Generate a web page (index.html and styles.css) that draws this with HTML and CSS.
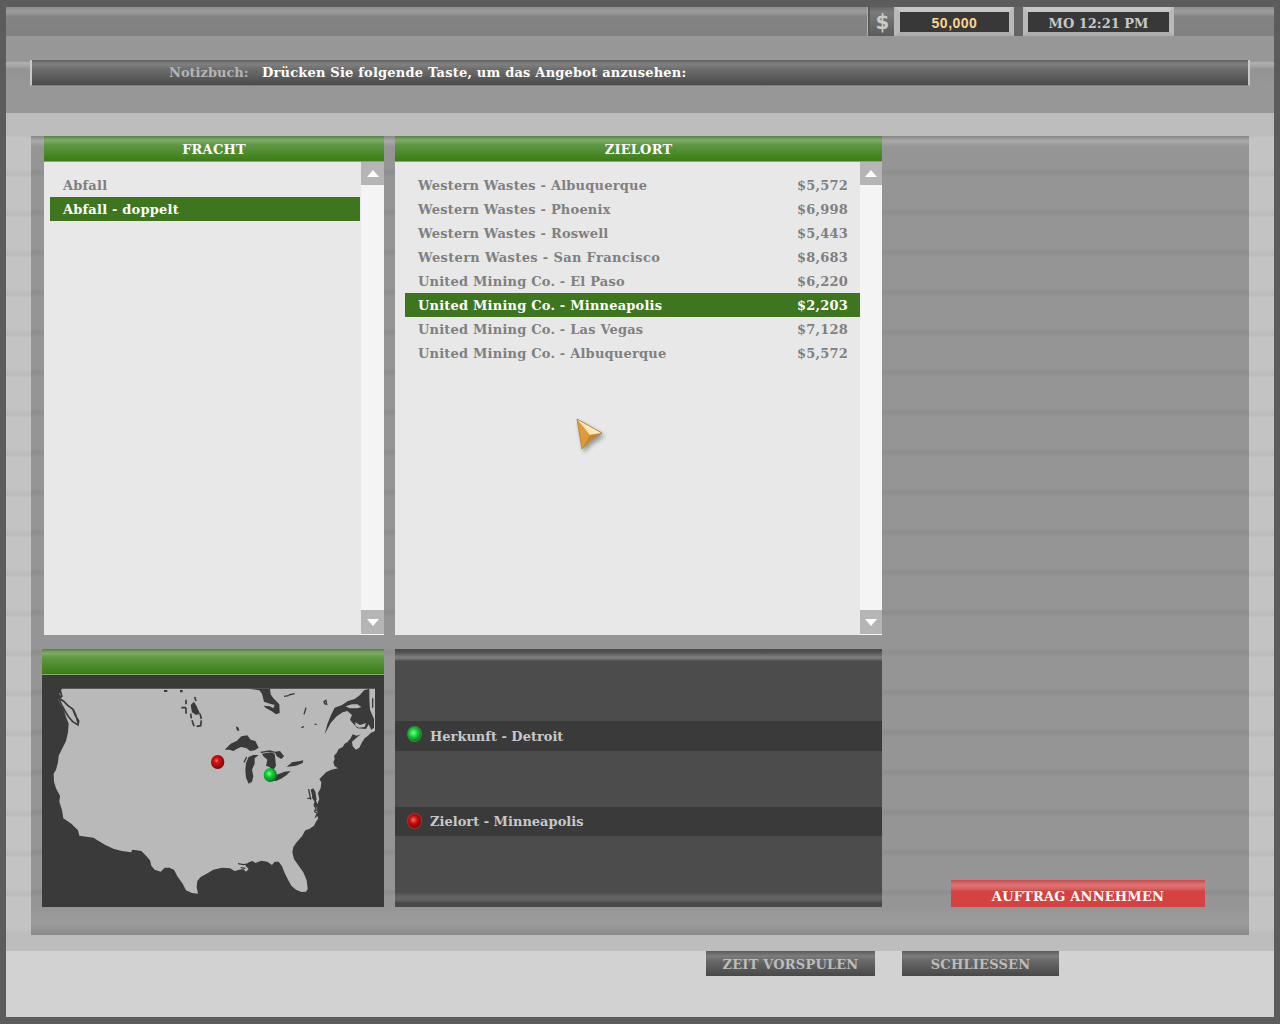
FILE: index.html
```
<!DOCTYPE html>
<html lang="de">

<head>
    <meta charset="UTF-8">
    <meta name="viewport" content="width=device-width, initial-scale=1.0">
    <title>Auftrag</title>
    <link rel="stylesheet" href="styles.css">
</head>

<body>
    <div class="window">
        <div class="topbar">
            <div class="dollar">$</div>
            <div class="display money">50,000</div>
            <div class="split"></div>
            <div class="display clock">MO 12:21 PM</div>
        </div>

        <div class="note-row">
            <div class="note">
                <span class="note-label">Notizbuch:</span>
                <span class="note-text">Drücken Sie folgende Taste, um das Angebot anzusehen:</span>
            </div>
        </div>

        <div class="main">
            <div class="panel">
                <div class="col cargo">
                    <div class="head">FRACHT</div>
                    <div class="list">
                        <ul class="items">
                            <li><span>Abfall</span></li>
                            <li class="active"><span>Abfall - doppelt</span></li>
                        </ul>
                        <div class="scroll">
                            <div class="btn-scroll"><i class="up"></i></div>
                            <div class="btn-scroll"><i class="down"></i></div>
                        </div>
                    </div>
                </div>

                <div class="col target">
                    <div class="head">ZIELORT</div>
                    <div class="list">
                        <ul class="items">
                            <li><span>Western Wastes - Albuquerque</span><b>$5,572</b></li>
                            <li><span>Western Wastes - Phoenix</span><b>$6,998</b></li>
                            <li><span>Western Wastes - Roswell</span><b>$5,443</b></li>
                            <li><span class="wide">Western Wastes - San Francisco</span><b>$8,683</b></li>
                            <li><span>United Mining Co. - El Paso</span><b>$6,220</b></li>
                            <li class="active"><span>United Mining Co. - Minneapolis</span><b>$2,203</b></li>
                            <li><span>United Mining Co. - Las Vegas</span><b>$7,128</b></li>
                            <li><span>United Mining Co. - Albuquerque</span><b>$5,572</b></li>
                        </ul>
                        <div class="scroll">
                            <div class="btn-scroll"><i class="up"></i></div>
                            <div class="btn-scroll"><i class="down"></i></div>
                        </div>
                    </div>
                </div>

                <div class="map">
                    <div class="head"></div>
                    <svg width="342" height="232" viewBox="6 90 1026 696">
                        <defs>
                            <radialGradient id="red" cx="42%" cy="40%" r="60%">
                                <stop offset="0" stop-color="#ff6a5a" />
                                <stop offset=".3" stop-color="#d41414" />
                                <stop offset="1" stop-color="#7a0505" />
                            </radialGradient>
                            <radialGradient id="green" cx="42%" cy="40%" r="60%">
                                <stop offset="0" stop-color="#7dff8c" />
                                <stop offset=".35" stop-color="#16d43c" />
                                <stop offset="1" stop-color="#067a1c" />
                            </radialGradient>
                        </defs>
                        <!-- land -->
                        <path class="land" d="M66 131H1005V258L992 264 984 272 974 280 966 292 958 308 948 314 938 304 936 290 948 280 962 268 950 272 938 268 932 280 922 292 914 296 908 306 896 312 890 324 882 332 884 342 880 352 884 364 894 370 874 374 858 382 848 392 838 402 844 412 842 430 834 444 838 462 832 478 826 460 818 444 816 458 824 470 820 480 832 488 828 496 834 502 830 510 835 520 828 530 822 542 808 552 796 556 786 574 770 592 760 606 757 622 762 642 776 662 790 682 800 706 803 732 798 740 784 741 768 734 754 722 744 704 734 684 726 664 716 650 704 650 696 660 682 650 664 647 646 654 638 648 626 652 616 662 626 672 618 680 610 672 598 674 584 678 570 670 546 668 520 674 500 686 482 696 472 708 470 726 474 746 456 744 438 736 428 716 412 694 402 674 388 668 374 668 362 680 344 674 334 662 330 646 318 632 304 618 290 616 276 614 274 622 246 618 222 612 196 600 160 578 118 572 114 556 94 536 70 520 66 496 58 470 60 452 54 442 48 430 42 410 41 386 48 374 54 352 56 332 66 312 78 288 84 262 86 236 78 216 72 196 60 176 54 162 66 158 58 146Z" />
                        <!-- lakes and bays -->
                        <g class="water">
                            <path d="M554 314L572 296 590 288 604 274 622 271 632 284 646 288 656 308 644 316 630 318 620 310 604 306 594 310 580 318 568 314Z" />
                            <path d="M618 354L626 336 640 330 656 330 644 340 644 356 636 374 640 394 636 410 626 416 618 398 616 376Z" />
                            <path d="M666 326L692 322 704 326 706 344 708 362 700 376 688 366 678 362 682 344 670 334Z" />
                            <path d="M704 320L720 318 732 334 724 342 710 334Z" />
                            <path d="M676 398L692 406 708 408 726 400 740 390 752 378 734 380 714 388Z" />
                            <path d="M740 366L756 352 780 348 790 346 788 354 768 362Z" />
                            <path d="M626 131H690L692 148 700 160 718 178 719 204 708 208 694 198 676 188 672 182 690 184 700 190 704 180 690 176 672 170 666 146 658 136Z" />
                            <path d="M854 268L862 238 872 212 884 188 906 180 924 168 944 162 960 150 972 136 988 131V164L990 194 1002 222 1002 248 994 254 986 238 978 252 952 250 936 232 930 224 936 210 922 198 908 202 890 214 872 234Z" />
                            <path d="M452 180L462 170 470 184 480 206 468 210 456 202Z" />
                            <path d="M372 135h10v6h-10zM420 135h8v7h-8zM588 244l8 4 2 10-8-2z" />
                            <path d="M812 434l8-4 6 10 4 24-8 2-6-16z" />
                        </g>
                        <path class="land" d="M916 184L936 178 952 178 964 186 952 190 930 190ZM946 232L960 240 978 234 974 246 956 248 946 242Z" />
                        <g class="line">
                            <path d="M56 160L70 168 84 182 98 192 106 212 116 228 114 240 98 230 86 216 74 196 64 178ZM60 134l6 22M100 194l8 18 6 22" />
                            <path d="M438 164v14M438 188v18M424 188h14M452 206l2 14M456 226l6 18M480 206l4 16M484 226l-2 16-12 2M464 156l4 12" />
                            <path class="thin" d="M732 154l14-2M746 150l18-4M798 188l-6 20M852 170l6-4 2 12-6-2zM784 248l8-3M824 238h6M612 352l8-16M662 322l28-4 14 4" />
                            <path class="thin" d="M802 460h12M806 432l6 32M822 482l6 6-4 12 8 4-6 14M594 656l16 3 16-2M602 668l14 2M998 160v28" />
                        </g>
                        <ellipse cx="533" cy="351" rx="20" ry="21" fill="url(#red)" />
                        <ellipse cx="691" cy="390" rx="20" ry="21" fill="url(#green)" />
                    </svg>
                </div>

                <div class="route">
                    <div class="stop"><span class="dot dot-green"></span><span>Herkunft - Detroit</span></div>
                    <div class="stop"><span class="dot dot-red"></span><span>Zielort - Minneapolis</span></div>
                </div>

                <div class="accept">AUFTRAG ANNEHMEN</div>
            </div>
        </div>

        <div class="footer">
            <div class="btn btn-time">ZEIT VORSPULEN</div>
            <div class="btn btn-close">SCHLIESSEN</div>
        </div>

        <svg class="cursor" width="36" height="42" viewBox="0 0 36 42">
            <path class="cursor-left" d="M4 4L9 34 17 20Z" />
            <path class="cursor-right" d="M4 4L29 18 17 20Z" />
            <path class="cursor-low" d="M17 20L9 34 17 26 29 18Z" />
            <path class="cursor-edge" d="M4 4L9 34 17 26 29 18Z" />
        </svg>
    </div>
</body>

</html>
```
FILE: styles.css
```
* {
    box-sizing: border-box;
    margin: 0;
    padding: 0;
}

body {
    width: 1280px;
    height: 1024px;
    overflow: hidden;
    font-family: "DejaVu Serif", serif;
    font-size: 13px;
    font-weight: bold;
    letter-spacing: 0.2px;
    white-space: nowrap;
}

.window {
    position: relative;
    display: flex;
    flex-direction: column;
    height: 1024px;
    border: 6px solid #5c5c5c;
    border-top-width: 7px;
    border-bottom-width: 7px;
    background: #979797;
}

/* top bar */
.topbar {
    display: flex;
    height: 29px;
    padding-left: 861px;
    background: linear-gradient(#8d8d8d, #9c9c9c 4px, #949494 7px, #848484 9px, #808080);
}

.dollar {
    width: 27px;
    padding-left: 3px;
    border-left: 1px solid #b0b0b0;
    box-shadow: inset 2px 0 0 #5a5a5a;
    background: linear-gradient(#666, #7a7a7a 5px, #5c5c5c);
    color: #cacaca;
    font-family: "DejaVu Sans", sans-serif;
    font-stretch: condensed;
    font-size: 22px;
    letter-spacing: 0;
    line-height: 29px;
    text-align: center;
}

.display {
    height: 29px;
    border: 5px solid #b9b9b9;
    border-bottom: 4px solid #acacac;
    border-top-color: #c6c6c6;
    background: #383838;
    text-align: center;
    line-height: 23px;
}

.money {
    width: 120px;
    border-left-width: 6px;
    color: #fad490;
    font-family: "Liberation Sans", Arial, sans-serif;
    font-size: 14px;
    letter-spacing: 0.5px;
}

.split {
    width: 9px;
    background: #646464;
}

.clock {
    width: 151px;
    color: #c8c8c8;
    letter-spacing: 0;
}

/* notebook line */
.note-row {
    height: 77px;
    padding: 24px 24px 0;
    background: linear-gradient(#979797 24px, #8c8c8c 24px, #b0b0b0 27px, #a0a0a0 31px, #949494 33px, #979797 50px);
}

.note {
    display: flex;
    height: 26px;
    padding-left: 137px;
    border: solid #c8c8c8;
    border-width: 0 2px;
    border-bottom: 1px solid #808080;
    background: linear-gradient(#626262, #808080 4px, #6e6e6e 9px, #4a4a4a);
    line-height: 25px;
}

.note-label {
    width: 93px;
    color: #b4b4b4;
    letter-spacing: 0;
}

.note-text {
    color: #fff;
}

/* main area */
.main {
    height: 838px;
    padding: 23px 25px 16px;
    background:
        linear-gradient(#bdbdbd, #bdbdbd) top / 100% 23px no-repeat,
        linear-gradient(#bdbdbd, #bdbdbd) bottom / 100% 16px no-repeat,
        repeating-linear-gradient(#c3c3c3 0 17px, #bdbdbd 19px 23px, #c3c3c3 25px 40px);
}

.panel {
    display: grid;
    grid-template-columns: 340px 487px 1fr;
    grid-template-rows: 499px 258px;
    column-gap: 11px;
    row-gap: 14px;
    height: 799px;
    padding-left: 13px;
    background:
        linear-gradient(#868686, #aaa 5px, #959595 11px, transparent 12px) top / 100% 12px no-repeat,
        linear-gradient(#959595, #9c9c9c 55%, #8a8a8a) bottom / 100% 28px no-repeat,
        repeating-linear-gradient(#959595 0 33px, #8f8f8f 35px 38px, #959595 40px);
}

.head {
    height: 26px;
    border-bottom: 1px solid #7fb060;
    background: linear-gradient(#56803f, #7fab67 4px, #5f9744 9px, #3b7d17);
    color: #fff;
    text-align: center;
    line-height: 27px;
}

.list {
    display: flex;
    height: 473px;
    background: #e8e8e8;
}

.items {
    flex: 1;
    padding-top: 11px;
    list-style: none;
    color: #808080;
}

.items li {
    display: flex;
    justify-content: space-between;
    height: 24px;
    padding: 0 12px 0 13px;
    line-height: 25px;
}

.items .active {
    background: #3e761f;
    color: #fff;
}

.items .wide {
    letter-spacing: 0.35px;
}

.cargo .items {
    padding-left: 6px;
    padding-right: 1px;
}

.target .items {
    padding-left: 10px;
}

.scroll {
    display: flex;
    flex-direction: column;
    justify-content: space-between;
    width: 23px;
    padding-bottom: 1px;
    background: #f4f4f4;
}

.target .scroll {
    width: 22px;
}

.btn-scroll {
    display: flex;
    align-items: center;
    justify-content: center;
    height: 23px;
    background: #b5b5b5;
}

.btn-scroll:last-child {
    height: 24px;
}

.up,
.down {
    border: 6px solid transparent;
}

.up {
    border-top: 0;
    border-bottom: 7px solid #fff;
}

.down {
    border-bottom: 0;
    border-top: 7px solid #fff;
}

/* map */
.map {
    grid-column: 1;
    margin-left: -2px;
    background: #3a3a3a;
}

.map svg {
    display: block;
}

.land {
    fill: #b9b9b9;
}

.water {
    fill: #3a3a3a;
}

.line {
    fill: none;
    stroke: #3a3a3a;
    stroke-width: 5;
}

.thin {
    stroke-width: 4;
}

/* origin and destination */
.route {
    padding-top: 72px;
    background:
        linear-gradient(#484848, #555 4px, #7e7e7e 8px, #747474 10px, #4c4c4c 12px) top / 100% 12px no-repeat,
        linear-gradient(#4c4c4c, #636363 5px, #606060 8px, #484848 11px) bottom / 100% 15px no-repeat,
        #4c4c4c;
}

.stop {
    display: flex;
    align-items: center;
    height: 30px;
    margin-bottom: 56px;
    padding-left: 12px;
    background: #3a3a3a;
    color: #c8c8c8;
    letter-spacing: 0;
    line-height: 29px;
}

.stop + .stop {
    height: 29px;
}

.dot {
    width: 15px;
    height: 16px;
    margin: -4px 8px 0 0;
    border-radius: 50%;
}

.dot-green {
    border: 1px solid #2f8c40;
    background: radial-gradient(circle at 42% 42%, #7dff8c, #16d43c 35%, #067a1c 75%);
}

.dot-red {
    margin-top: -1px;
    border: 1px solid #a33;
    background: radial-gradient(circle at 42% 42%, #ff6a5a, #c80c0c 35%, #700 75%);
}

.accept {
    align-self: end;
    width: 254px;
    height: 27px;
    margin-left: 58px;
    background: linear-gradient(#cb4a4a, #dc7676 5px, #d86060 9px, #d44242 11px);
    color: #fff;
    text-align: center;
    line-height: 33px;
}

/* footer buttons */
.footer {
    display: flex;
    flex: 1;
    gap: 27px;
    padding-left: 700px;
    background: #d2d2d2;
}

.btn {
    height: 25px;
    background: linear-gradient(#5c5c5c, #7c7c7c 5px, #686868 10px, #484848);
    color: #bcbcbc;
    text-align: center;
    line-height: 27px;
}

.btn-time {
    width: 169px;
}

.btn-close {
    width: 157px;
}

/* mouse pointer floats over the lists */
.cursor {
    position: absolute;
    left: 567px;
    top: 408px;
    filter: drop-shadow(2px 3px 2px rgba(0, 0, 0, .35));
}

.cursor-left {
    fill: #e09a38;
}

.cursor-right {
    fill: #ffe9b8;
}

.cursor-low {
    fill: #c8852c;
}

.cursor-edge {
    fill: none;
    stroke: #b08850;
    stroke-width: 1;
}
```
